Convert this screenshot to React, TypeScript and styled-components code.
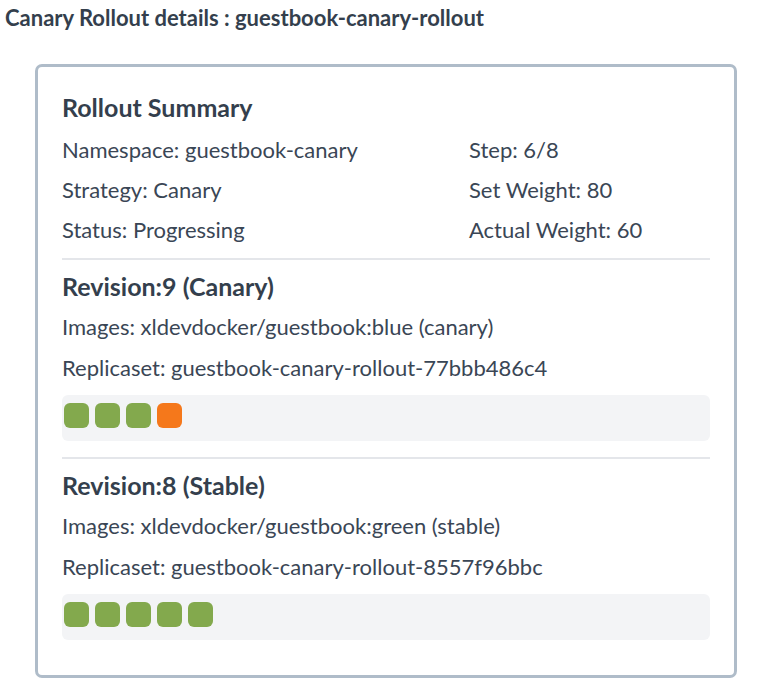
import React from 'react'
import styled, { createGlobalStyle } from 'styled-components'

const GlobalStyle = createGlobalStyle`
  body {
    margin: 0;
    background: #ffffff;
    font-family: Lato, "Open Sans", sans-serif;
    color: #3a4655;
  }
`

type Pod = { id: string; status: 'ready' | 'progressing' }

interface Revision {
  number: number
  label: string
  image: string
  replicaset: string
  pods: Pod[]
}

const revisions: Revision[] = [
  {
    number: 9,
    label: 'Canary',
    image: 'xldevdocker/guestbook:blue (canary)',
    replicaset: 'guestbook-canary-rollout-77bbb486c4',
    pods: [
      { id: 'a', status: 'ready' },
      { id: 'b', status: 'ready' },
      { id: 'c', status: 'ready' },
      { id: 'd', status: 'progressing' },
    ],
  },
  {
    number: 8,
    label: 'Stable',
    image: 'xldevdocker/guestbook:green (stable)',
    replicaset: 'guestbook-canary-rollout-8557f96bbc',
    pods: [
      { id: 'a', status: 'ready' },
      { id: 'b', status: 'ready' },
      { id: 'c', status: 'ready' },
      { id: 'd', status: 'ready' },
      { id: 'e', status: 'ready' },
    ],
  },
]

const App: React.FC = () => {
  return (
    <>
      <GlobalStyle />
      <StyledPage>
        <StyledPageTitle>Canary Rollout details : guestbook-canary-rollout</StyledPageTitle>
        <StyledCard>
          <StyledHeading gap={3}>Rollout Summary</StyledHeading>
          <StyledSummary>
            <StyledLine>Namespace: guestbook-canary</StyledLine>
            <StyledLine>Step: 6/8</StyledLine>
            <StyledLine>Strategy: Canary</StyledLine>
            <StyledLine>Set Weight: 80</StyledLine>
            <StyledLine>Status: Progressing</StyledLine>
            <StyledLine>Actual Weight: 60</StyledLine>
          </StyledSummary>
          {revisions.map((r) => (
            <StyledRevision key={r.number}>
              <StyledHeading>
                Revision:{r.number} ({r.label})
              </StyledHeading>
              <StyledLine tall>Images: {r.image}</StyledLine>
              <StyledLine tall>Replicaset: {r.replicaset}</StyledLine>
              <StyledPods>
                {r.pods.map((p) => (
                  <StyledPod key={p.id} status={p.status} />
                ))}
              </StyledPods>
            </StyledRevision>
          ))}
        </StyledCard>
      </StyledPage>
    </>
  )
}

const StyledPage = styled.div`
  padding: 4px 0 0 5px;
`

const StyledPageTitle = styled.h1`
  margin: 0;
  font-size: 22px;
  font-weight: 700;
  line-height: 28px;
  color: #343f4d;
  white-space: nowrap;
`

const StyledCard = styled.div`
  margin: 32px 0 0 30px;
  width: 702px;
  border: 3px solid #afbcc9;
  border-radius: 7px;
  padding: 20px 24px 35px;
  box-sizing: border-box;
`

const StyledHeading = styled.h2<{ gap?: number }>`
  margin: 0 0 ${(p) => p.gap ?? 0}px;
  font-size: 25px;
  font-weight: 700;
  line-height: 40px;
  color: #343f4d;
  white-space: nowrap;
`

const StyledSummary = styled.div`
  display: grid;
  grid-template-columns: 407px 1fr;
  padding-bottom: 8px;
`

const StyledLine = styled.div<{ tall?: boolean }>`
  font-size: 22px;
  line-height: ${(p) => (p.tall ? 41 : 40)}px;
  white-space: nowrap;
`

const StyledRevision = styled.div`
  border-top: 2px solid #e4e6ea;
  padding-top: 6px;
  & + & {
    margin-top: 16px;
  }
`

const StyledPods = styled.div`
  display: flex;
  gap: 6px;
  margin-top: 7px;
  height: 46px;
  padding: 8px 2px;
  box-sizing: border-box;
  background: #f3f4f6;
  border-radius: 6px;
`

const StyledPod = styled.div<{ status: Pod['status'] }>`
  width: 25px;
  height: 25px;
  border-radius: 6px;
  background: ${(p) => (p.status === 'ready' ? '#83a94d' : '#f5781b')};
`

export default App
